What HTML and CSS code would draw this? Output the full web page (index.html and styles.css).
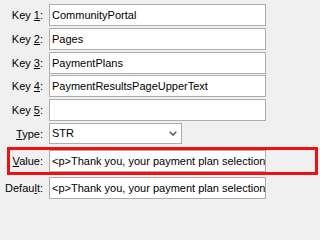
FILE: index.html
```html
<!DOCTYPE html>
<html>
<head>
<meta charset="utf-8">
<link rel="stylesheet" href="styles.css">
</head>
<body>
<div class="form">
  <div class="keys">
    <div class="row"><label class="lbl">Key <u>1</u>:</label><div class="field">CommunityPortal</div></div>
    <div class="row"><label class="lbl">Key <u>2</u>:</label><div class="field">Pages</div></div>
    <div class="row"><label class="lbl">Key <u>3</u>:</label><div class="field">PaymentPlans</div></div>
    <div class="row"><label class="lbl">Key <u>4</u>:</label><div class="field">PaymentResultsPageUpperText</div></div>
    <div class="row"><label class="lbl">Key <u>5</u>:</label><div class="field"></div></div>
  </div>
  <div class="row row-type"><label class="lbl"><u>T</u>ype:</label><div class="field select"><span>STR</span><svg class="chev" width="8" height="5" viewBox="0 0 8 5"><path d="M0.7 0.7 L4 4 L7.3 0.7" fill="none" stroke="#606060" stroke-width="1.6"/></svg></div></div>
  <div class="row row-value"><label class="lbl"><u>V</u>alue:</label><div class="field">&lt;p&gt;Thank you, your payment plan selection</div></div>
  <div class="row row-default"><label class="lbl">Defau<u>l</u>t:</label><div class="field">&lt;p&gt;Thank you, your payment plan selection</div></div>
</div>
</body>
</html>
```
FILE: styles.css
```css
body {
  margin: 0;
  background: #f0f0f0;
  font-family: "Liberation Sans", Arial, sans-serif;
  font-size: 11px;
  color: #000;
}
.form {
  display: flex;
  flex-direction: column;
  padding-top: 4px;
}
.keys {
  display: flex;
  flex-direction: column;
  gap: 1.75px;
}
.row {
  display: flex;
  align-items: center;
  height: 22px;
}
.lbl {
  width: 43px;
  margin-right: 6px;
  text-align: right;
  white-space: nowrap;
  flex: none;
}
.field {
  width: 217px;
  height: 22px;
  box-sizing: border-box;
  border: 1px solid #adadad;
  background: #fff;
  padding: 0 0 0 2px;
  line-height: 20px;
  overflow: hidden;
  white-space: nowrap;
  flex: none;
}
.row-type {
  margin-top: 2px;
  height: 21px;
}
.select {
  width: 133px;
  height: 21px;
  line-height: 19px;
  display: flex;
  justify-content: space-between;
  align-items: center;
  padding-right: 4px;
}
.chev {
  display: block;
}
.row-value {
  margin: 3px 2px 0 7px;
  border: 3px solid #ee1111;
  height: 28px;
  box-sizing: border-box;
}
.row-value .lbl {
  width: 33px;
}
.row-default {
  margin-top: 2px;
}
```
